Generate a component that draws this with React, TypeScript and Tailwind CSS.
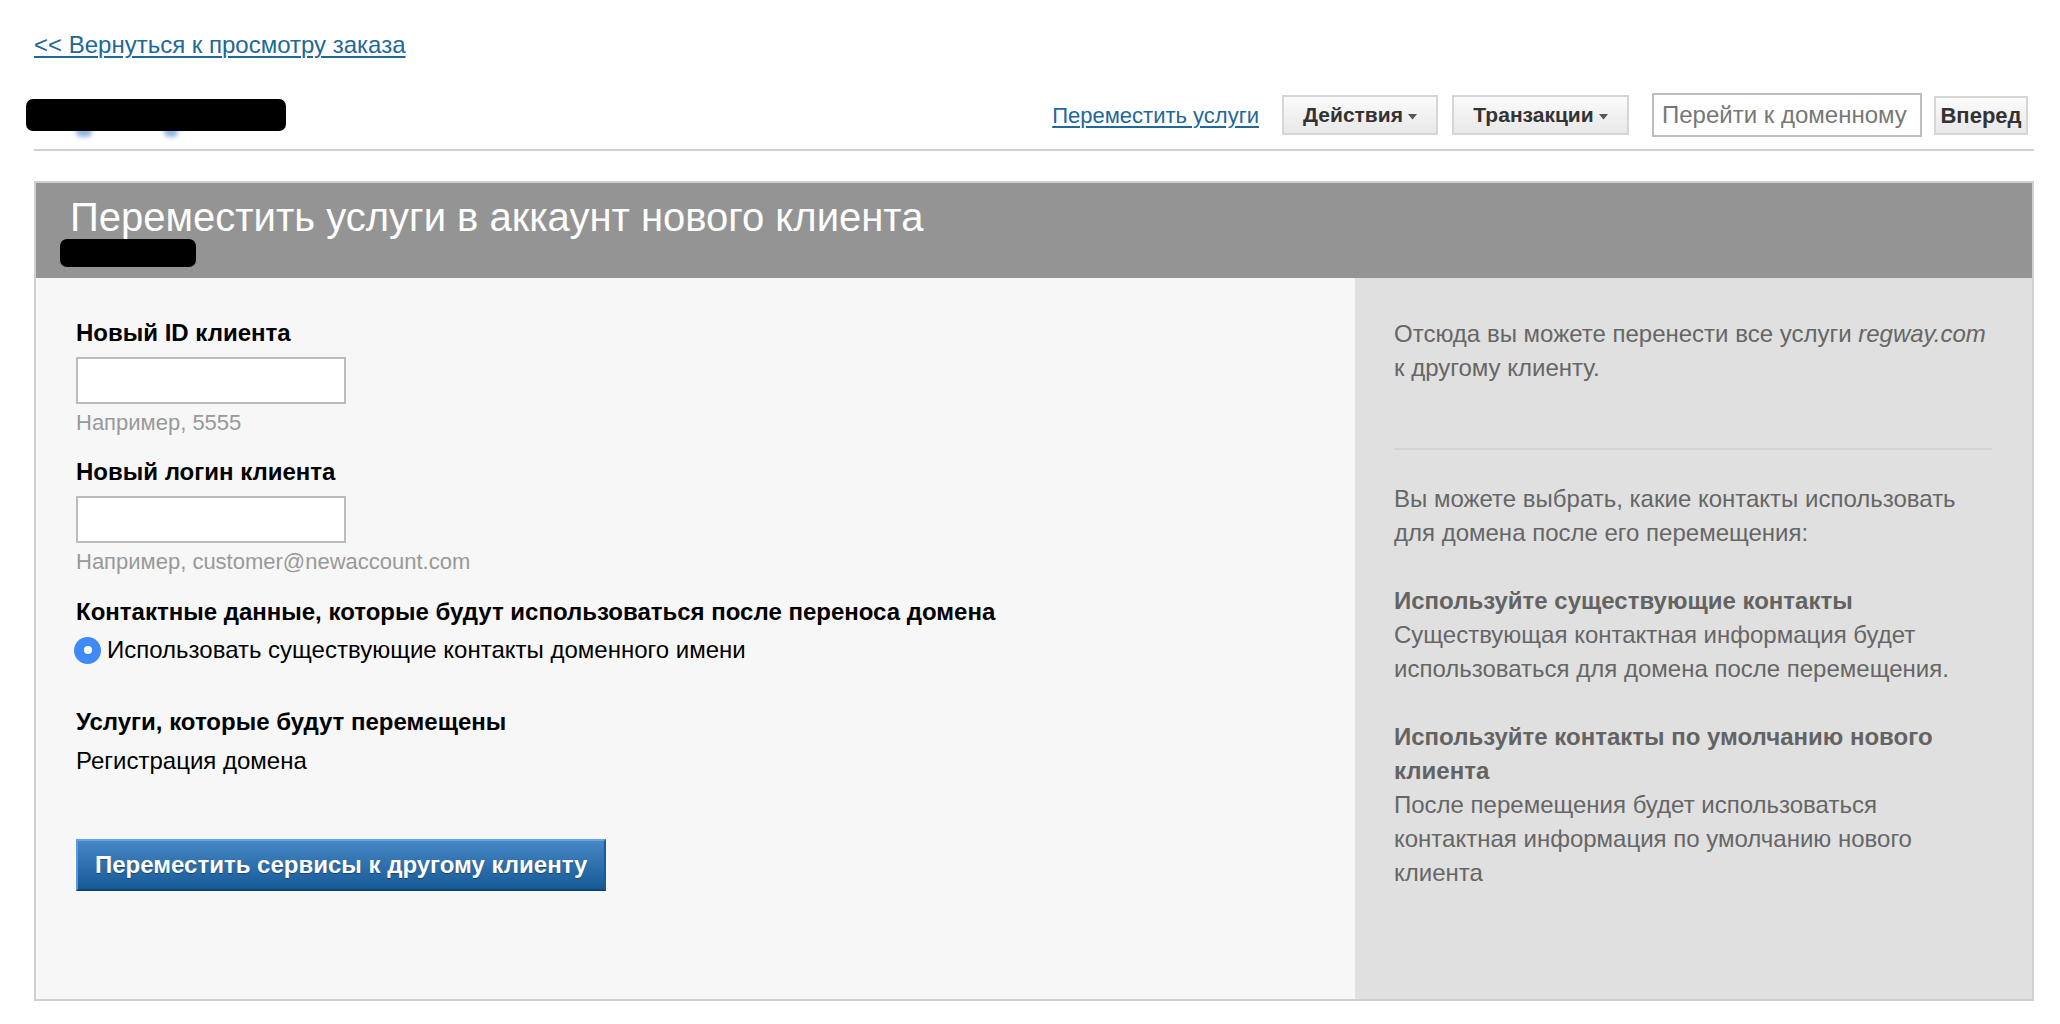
export default function App(): JSX.Element {
  const font = "font-['Liberation_Sans',Arial,Helvetica,sans-serif]";

  const Caret = () => (
    <svg width="9" height="6" viewBox="0 0 9 6" className="ml-[5px] mt-[3px]">
      <path d="M0 0 L9 0 L4.5 5.5 Z" fill="#555" />
    </svg>
  );

  return (
    <div className={`${font} min-h-screen bg-white pl-[34px] pr-[26px]`}>
      {/* Back link */}
      <div className="pt-[31px]">
        <a href="#" className="text-[24px] leading-[28px] text-[#21689a] underline decoration-[2px] underline-offset-[3px]">
          &lt;&lt; Вернуться к просмотру заказа
        </a>
      </div>

      {/* Top bar */}
      <div className="mt-[33px] flex h-[44px] items-center justify-between pr-[6px]">
        <div className="relative ml-[-8px] h-[32px] w-[260px]">
          <div className="absolute left-[50px] top-[28px] h-[10px] w-[16px] rounded-full bg-[#4c86cf] opacity-60 blur-[2px]" />
          <div className="absolute left-[138px] top-[28px] h-[10px] w-[14px] rounded-full bg-[#4c86cf] opacity-60 blur-[2px]" />
          <div className="absolute inset-0 rounded-[7px] bg-black" />
        </div>
        <div className="flex items-center">
          <a href="#" className="text-[22px] text-[#21689a] underline decoration-[2px] underline-offset-[3px]">
            Переместить услуги
          </a>
          <button className="ml-[23px] flex h-[40px] w-[156px] items-center justify-center border-2 border-[#d6d6d6] bg-gradient-to-b from-[#fbfbfb] to-[#e8e8e8] text-[21px] font-bold text-[#333]">
            Действия
            <Caret />
          </button>
          <button className="ml-[14px] flex h-[40px] w-[177px] items-center justify-center border-2 border-[#d6d6d6] bg-gradient-to-b from-[#fbfbfb] to-[#e8e8e8] text-[21px] font-bold text-[#333]">
            Транзакции
            <Caret />
          </button>
          <input
            placeholder="Перейти к доменному"
            className="ml-[23px] h-[44px] w-[270px] border-2 border-[#bdbdbd] bg-white pl-[8px] text-[24px] text-[#333] placeholder:text-[#777] outline-none"
          />
          <button className="ml-[12px] flex h-[39px] w-[94px] items-center justify-center border-2 border-[#d6d6d6] bg-gradient-to-b from-[#fbfbfb] to-[#e8e8e8] text-[22px] font-bold text-[#333]">
            Вперед
          </button>
        </div>
      </div>

      <div className="mt-[12px] h-[2px] w-[2000px] bg-[#d0d0d0]" />

      {/* Panel */}
      <div className="mt-[30px] w-[2000px] border-2 border-[#d0d0d0]">
        <div className="h-[95px] bg-[#949494] pl-[24px] pt-[12px]">
          <h1 className="ml-[10px] text-[40px] leading-[44px] font-normal text-white">
            Переместить услуги в аккаунт нового клиента
          </h1>
          <div className="h-[28px] w-[136px] rounded-[7px] bg-black" />
        </div>

        <div className="flex h-[721px]">
          {/* Form */}
          <div className="w-[1319px] bg-[#f7f7f7] pl-[40px] pt-[41px]">
            <div className="text-[24px] leading-[28px] font-bold text-black">Новый ID клиента</div>
            <input className="mt-[10px] block h-[47px] w-[270px] border-2 border-[#bcbcbc] bg-white outline-none" />
            <div className="mt-[6px] text-[22px] leading-[26px] text-[#999]">Например, 5555</div>

            <div className="mt-[22px] text-[24px] leading-[28px] font-bold text-black">Новый логин клиента</div>
            <input className="mt-[10px] block h-[47px] w-[270px] border-2 border-[#bcbcbc] bg-white outline-none" />
            <div className="mt-[6px] text-[22px] leading-[26px] text-[#999]">Например, customer@newaccount.com</div>

            <div className="mt-[23px] text-[24px] leading-[28px] font-bold text-black">
              Контактные данные, которые будут использоваться после переноса домена
            </div>
            <label className="mt-[10px] ml-[-2px] flex h-[28px] items-center">
              <span className="flex h-[27px] w-[27px] items-center justify-center rounded-full bg-[#3f8af5]">
                <span className="h-[8px] w-[8px] rounded-full bg-white" />
              </span>
              <span className="ml-[6px] text-[24px] leading-[28px] text-black">
                Использовать существующие контакты доменного имени
              </span>
            </label>

            <div className="mt-[44px] text-[24px] leading-[28px] font-bold text-black">Услуги, которые будут перемещены</div>
            <div className="mt-[11px] text-[24px] leading-[28px] text-black">Регистрация домена</div>

            <button className="mt-[64px] h-[52px] border-2 border-t-[#68a2ea] border-l-[#5c97e0] border-r-[#1b5c98] border-b-[#0d4478] bg-gradient-to-b from-[#4586c4] to-[#155b97] px-[17px] text-[24px] font-bold text-white [text-shadow:0_1px_1px_rgba(0,0,0,0.35)]">
              Переместить сервисы к другому клиенту
            </button>
          </div>

          {/* Help */}
          <div className="flex-1 bg-[#e0e0e0] pl-[39px] pr-[40px] pt-[39px] text-[24px] leading-[34px] text-[#666] whitespace-nowrap">
            <p>
              Отсюда вы можете перенести все услуги <i>regway.com</i>
              <br />к другому клиенту.
            </p>
            <div className="mt-[63px] h-[2px] bg-[#d2d2d2]" />
            <p className="mt-[32px]">
              Вы можете выбрать, какие контакты использовать
              <br />для домена после его перемещения:
            </p>
            <p className="mt-[34px]">
              <b className="text-[#636363]">Используйте существующие контакты</b>
              <br />Существующая контактная информация будет
              <br />использоваться для домена после перемещения.
            </p>
            <p className="mt-[34px]">
              <b className="text-[#636363]">Используйте контакты по умолчанию нового</b>
              <br />
              <b className="text-[#636363]">клиента</b>
              <br />После перемещения будет использоваться
              <br />контактная информация по умолчанию нового
              <br />клиента
            </p>
          </div>
        </div>
      </div>
    </div>
  );
}
